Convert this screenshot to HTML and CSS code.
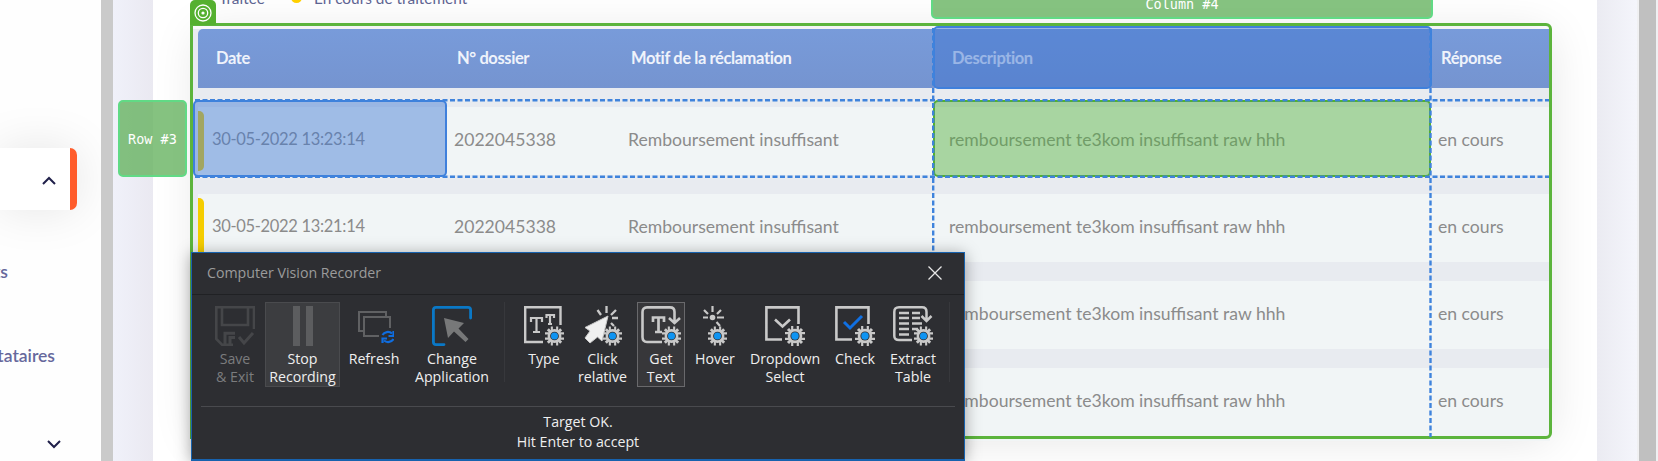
FILE: index.html
```
<!DOCTYPE html>
<html lang="fr">
<head>
<meta charset="utf-8">
<title>Réclamations</title>
<link rel="stylesheet" href="styles.css">
</head>
<body>
<svg width="0" height="0" class="defs">
  <symbol id="gear" viewBox="0 0 20 20">
    <path d="M7.200 0V20M12.800 0V20M0 7.200H20M0 12.800H20" stroke="#c9c9c9" stroke-width="2.200"/>
    <path d="M3 3L17 17M17 3L3 17" stroke="#c9c9c9" stroke-width="3"/>
    <circle cx="10" cy="10" r="7.300" fill="#c9c9c9"/><circle cx="10" cy="10" r="4.600" fill="#2f3033"/><circle cx="10" cy="10" r="3.700" fill="#0f94f2"/>
  </symbol>
</svg>
<div class="page">
  <nav class="sidebar">
    <div class="nav-card"><svg width="14" height="9" viewBox="0 0 14 9"><path d="M1 8L7 2L13 8" fill="none" stroke="#20204a" stroke-width="2"/></svg></div>
    <span class="nav-link">ts</span>
    <span class="nav-link second">tataires</span>
    <svg class="nav-down" width="14" height="9" viewBox="0 0 14 9"><path d="M1 1L7 7L13 1" fill="none" stroke="#20204a" stroke-width="2"/></svg>
  </nav>
  <div class="side-scroll"></div>
  <div class="gutter"></div>
  <main class="card">
    <div class="legend"><span>Traitée</span><i></i><span>En cours de traitement</span></div>
    <div class="table">
      <div class="row head"><b class="date">Date</b><b>N° dossier</b><b class="motif">Motif de la réclamation</b><b class="desc">Description</b><b class="rep">Réponse</b></div>
      <div class="row"><span class="date">30-05-2022 13:23:14</span><span>2022045338</span><span class="motif">Remboursement insuffisant</span><span class="desc">remboursement te3kom insuffisant raw hhh</span><span class="rep">en cours</span></div>
      <div class="row"><span class="date">30-05-2022 13:21:14</span><span>2022045338</span><span class="motif">Remboursement insuffisant</span><span class="desc">remboursement te3kom insuffisant raw hhh</span><span class="rep">en cours</span></div>
      <div class="row"><span class="date"></span><span></span><span class="motif"></span><span class="desc">remboursement te3kom insuffisant raw hhh</span><span class="rep">en cours</span></div>
      <div class="row"><span class="date"></span><span></span><span class="motif"></span><span class="desc">remboursement te3kom insuffisant raw hhh</span><span class="rep">en cours</span></div>
    </div>
  </main>
  <div class="gutter right"></div>
  <div class="page-scroll"></div>
</div>

<div class="target-frame"></div>
<div class="target-tab"><svg width="18" height="18" viewBox="0 0 18 18" fill="none" stroke="#fff"><circle cx="9" cy="9" r="8" stroke-width="1.3"/><circle cx="9" cy="9" r="4.7" stroke-width="1.3"/><circle cx="9" cy="9" r="1.6" fill="#fff" stroke="none"/></svg></div>
<div class="mark head-mark"></div>
<div class="mark date-mark"></div>
<div class="mark cell-mark"></div>
<svg class="guides" width="1658" height="461"><g fill="none" stroke="#3f83dc"><path d="M195 100.2H1549M195 176.7H1549" stroke-dasharray="5 2.5" stroke-width="2.4"/><path d="M933.2 28V437M1430.5 28V437" stroke-dasharray="5 2.5" stroke-width="2.4"/></g></svg>
<div class="tag row-tag">Row #3</div>
<div class="tag col-tag">Column #4</div>

<section class="recorder">
  <header><span>Computer Vision Recorder</span><svg width="14" height="14" viewBox="0 0 14 14"><path d="M.5 .5L13.5 13.5M13.5 .5L.5 13.5" stroke="#e8e8e8" stroke-width="1.3"/></svg></header>
  <div class="tools">
    <div class="tool dim"><svg viewBox="0 0 40 40" fill="none" stroke="#454649" stroke-width="2.6"><path d="M39 23V1.3H1.3V33L7 38.7H18M7 1V19H33V1"/><path d="M10 39V27.3H20M15 39V31.5H20M24 31L29 37L38 27" stroke-width="3"/></svg><span>Save<br>&amp; Exit</span></div>
    <div class="tool active"><svg viewBox="0 0 40 40"><path d="M10 0H17V40H10ZM23 0H30V40H23Z" fill="#5c5d5f"/></svg><span>Stop<br>Recording</span></div>
    <div class="tool"><svg viewBox="0 0 40 40" fill="none" stroke="#606163" stroke-width="2"><path d="M32 10V6H5V25H9M36 22V11H10V30H25"/><g stroke="#0f6de0" stroke-width="2.2"><path d="M28.5 29A6 5.5 0 0 1 38 27.5M39.5 33A6 5.5 0 0 1 30 34.5"/><path d="M39.5 25V30H34.5M28.5 37V32.5H33"/></g></svg><span>Refresh</span></div>
    <div class="tool"><svg viewBox="0 0 40 40"><path d="M12 38.6H4Q1.4 38.6 1.4 36V4Q1.4 1.4 4 1.4H36Q38.6 1.4 38.6 4V12" fill="none" stroke="#0a78c6" stroke-width="2.8" stroke-linecap="round"/><path d="M12 12L32 17L26.500 22.500L36.500 33L33.500 36L22 25.500L16 32Z" fill="#777879"/></svg><span>Change<br>Application</span></div>
    <i class="sep"></i>
    <div class="tool"><svg viewBox="0 0 40 40"><path d="M19 36H1.2V1.2H36.5V19" fill="none" stroke="#c9c9c9" stroke-width="2.4"/><path d="M7 16V12H18V16M12.500 11V26M9 26H16M22.500 12V9H30V12M26 9V18M24 18H28" fill="none" stroke="#c9c9c9" stroke-width="2.2"/><use href="#gear" x="21" y="20" width="19" height="20"/></svg><span>Type</span></div>
    <div class="tool click"><svg viewBox="0 0 40 40"><use href="#gear" x="20" y="20" width="19" height="20"/><path d="M14.500 4L18 9M23.500 0V7M33 4L28 9M29 12H35M28 17L31 20" stroke="#c9c9c9" stroke-width="2.3"/><path d="M25 10L19 35L14.500 31L7 37L2 32L7 25L2 21.500Z" fill="#f0f0f0" stroke="#c9c9c9"/></svg><span>Click<br>relative</span></div>
    <div class="tool chosen"><svg viewBox="0 0 40 40"><path d="M21 36H6Q1.5 36 1.5 31V6Q1.5 1.400 6 1.400H29Q33.500 1.400 33.500 6V16M28 12L33.500 17L39 12" fill="none" stroke="#c9c9c9" stroke-width="2.6"/><path d="M12 16V11.500H23V16M17.500 11V26M14 26H21" fill="none" stroke="#c9c9c9" stroke-width="2.700"/><use href="#gear" x="21" y="20" width="19" height="20"/></svg><span>Get<br>Text</span></div>
    <div class="tool"><svg viewBox="0 0 40 40"><g transform="translate(3 0)"><path d="M6 4L10 8M14.500 0V6M23 4L19 8M5 11.500H10M19 11.500H26M18.500 16L22 20" stroke="#c9c9c9" stroke-width="2.200"/><circle cx="14.500" cy="11.500" r="2.800" fill="#c9c9c9"/><use href="#gear" x="10" y="20" width="19" height="20"/></g></svg><span>Hover</span></div>
    <div class="tool"><svg viewBox="0 0 40 40"><path d="M17 33.500H1.400V1.400H33.500V18M10 13.500L17.500 20.500L25 13.500" fill="none" stroke="#c9c9c9" stroke-width="2.600"/><use href="#gear" x="20" y="20" width="20" height="20"/></svg><span>Dropdown<br>Select</span></div>
    <div class="tool"><svg viewBox="0 0 40 40"><path d="M17 33.500H1.400V1.400H33.500V18" fill="none" stroke="#c9c9c9" stroke-width="2.600"/><path d="M9 16L15 22L27 10" fill="none" stroke="#1070e2" stroke-width="3"/><use href="#gear" x="20" y="20" width="20" height="20"/></svg><span>Check</span></div>
    <div class="tool"><svg viewBox="0 0 40 40"><path d="M19 34H6Q1.300 34 1.300 30V6Q1.300 1.300 6 1.300H29Q33.500 1.300 33.500 6V14M28.500 10L33.500 15L38.500 10" fill="none" stroke="#c9c9c9" stroke-width="2.500"/><path d="M6 7H16M19 7H27M6 12H16M19 12H27M6 17.500H16M19 17.500H29M6 23H16M19 23H25M6 28.500H16" stroke="#c9c9c9" stroke-width="2.300"/><use href="#gear" x="21" y="20" width="19" height="20"/></svg><span>Extract<br>Table</span></div>
    <i class="sep"></i>
  </div>
  <footer>Target OK.<br>Hit Enter to accept</footer>
</section>
</body>
</html>
```
FILE: styles.css
```
* { box-sizing: border-box; }
body { margin: 0; width: 1658px; height: 461px; overflow: hidden; position: relative; font-family: Lato, sans-serif; background: #f4f5fa; }
.defs { position: absolute; }
.page { display: flex; height: 461px; }
.sidebar { width: 101px; flex: none; background: #fefefe; padding-top: 148px; display: flex; flex-direction: column; overflow: hidden; }
.nav-card { width: 77px; height: 62px; flex: none; background: linear-gradient(#fff, #fff) 0 0 / 70px 62px no-repeat #ff5c2b; border-radius: 0 7px 7px 0; box-shadow: 0 0 48px rgba(0,0,0,.1); display: flex; align-items: center; justify-content: flex-end; padding: 2px 21px 0 0; }
.nav-link { width: 8px; margin-top: 50px; font-size: 17.500px; line-height: 24px; font-weight: 600; color: #66689c; display: flex; justify-content: flex-end; white-space: nowrap; }
.nav-link.second { width: 55px; margin-top: 60px; }
.nav-down { margin: 72px 0 0 47px; flex: none; }
.side-scroll { width: 12px; background: #cacaca; }
.gutter { width: 40px; background: linear-gradient(90deg, #f0f1fa, #eae9f1); }
.gutter.right { background: linear-gradient(90deg, #ebebf2, #f4f5fb); }
.page-scroll { width: 21px; background: #c0c0c0; border: solid #f0f0f2; border-width: 0 2px; }
.card { width: 1444px; flex: none; background: #fff; padding-left: 45px; overflow: hidden; }
.legend { height: 29px; display: flex; align-items: flex-start; padding-left: 23px; font-size: 15.400px; line-height: 20px; color: #5d6492; }
.legend span { margin-top: -12px; }
.legend span:first-child { margin-left: -2px; }
.legend i { width: 11px; height: 11px; background: #ffd000; border-radius: 50%; margin: -8px 12px 0 26px; }
.table { width: 1352px; background: #e8ebf0; display: flex; flex-direction: column; gap: 19px; box-shadow: -5px 0 #e8ebf0, 0 5px #f1f5f6, 0 4px 44px 0 rgba(0,0,0,.11); }
.row { height: 68px; display: grid; grid-template-columns: 256px 174px 321px 489px 1fr; align-items: center; background: #f1f5f6; color: #8b8b8b; font-size: 17.600px; white-space: nowrap; padding-bottom: 3px; }
.row .date { display: flex; align-items: center; gap: 8px; font-size: 16.500px; letter-spacing: -.32px; line-height: 56px; height: 60px; margin-top: 3px; }
.row:not(.head) .date { align-items: flex-start; }
.row:not(.head) .date::before { content: ""; width: 6px; height: 60px; background: #f5cd00; border-radius: 0 5px 5px 0; }
.row.head { height: 59px; background: linear-gradient(#789bda, #7594d0); border-radius: 5px 0 0 0; color: #eff3fb; font-size: 16.500px; letter-spacing: -.4px; padding-bottom: 2px; }
.row.head b { padding-left: 3px; }
.row.head b.date { font-size: inherit; letter-spacing: inherit; line-height: normal; padding-left: 18px; margin: 0; height: auto; }
.target-frame { position: absolute; left: 190px; top: 23px; width: 1362px; height: 416px; border: 3px solid #5cb43c; border-radius: 0 6px 6px 0; }
.target-tab { position: absolute; left: 190px; top: 0; width: 26px; height: 25px; border-radius: 5px 5px 0 0; background: #55b02f; padding: 4px; }
.target-tab svg { display: block; }
.mark { position: absolute; border: 2px solid #3f80dc; border-radius: 5px; background: rgba(63,120,212,.46); }
.head-mark { left: 933px; top: 26px; width: 499px; height: 63px; background: rgba(60,115,207,.48); }
.date-mark { left: 193px; top: 100px; width: 254px; height: 77px; }
.cell-mark { left: 933px; top: 100px; width: 498px; height: 77px; border-color: #55b02f; background: rgba(85,176,65,.47); }
.guides { position: absolute; left: 0; top: 0; }
.tag { position: absolute; border: 2px solid #61da85; border-radius: 5px; background: rgba(100,177,94,.79); color: #fff; font: 13.500px/75px "DejaVu Sans Mono", monospace; text-align: center; }
.row-tag { left: 118px; top: 100px; width: 69px; height: 77px; }
.col-tag { left: 931px; top: -40px; width: 502px; height: 59px; line-height: 85px; }
.recorder { position: absolute; left: 191px; top: 252px; width: 774px; height: 209px; background: #2d2e32; border: 1px solid #1762ae; border-bottom-width: 2px; color: #efefef; font-family: "Open Sans", sans-serif; font-size: 14.200px; box-shadow: 0 2px 15px rgba(0,0,0,.35); }
.recorder header { height: 42px; border-bottom: 1px solid #202124; padding: 0 22px 2px 15px; display: flex; justify-content: space-between; align-items: center; color: #9b9b9b; }
.tools { display: grid; grid-template-columns: 60px 75px 68px 88px 16px 64px 57px 52px 60px 80px 60px 56px 16px; height: 84px; margin: 7px 0 0 13px; }
.tool { border: 1px solid transparent; display: flex; flex-direction: column; align-items: center; text-align: center; line-height: 18px; padding-top: 3px; white-space: nowrap; }
.tool svg { width: 40px; height: 40px; flex: none; margin-bottom: 4px; }
.tool.dim { color: #7b7c7e; }
.tool.active { background: #3c3d40; border-color: #4a4b4e; }
.tool.click { padding-right: 4px; }
.tool.chosen { background: #37373a; border-color: #69696c; margin: 0 0 0 4px; }
.sep { width: 1px; height: 80px; background: #37383c; justify-self: center; }
.recorder footer { margin: 20px 9px 0; border-top: 1px solid #494a4e; padding-top: 5px; text-align: center; line-height: 20px; }
```
